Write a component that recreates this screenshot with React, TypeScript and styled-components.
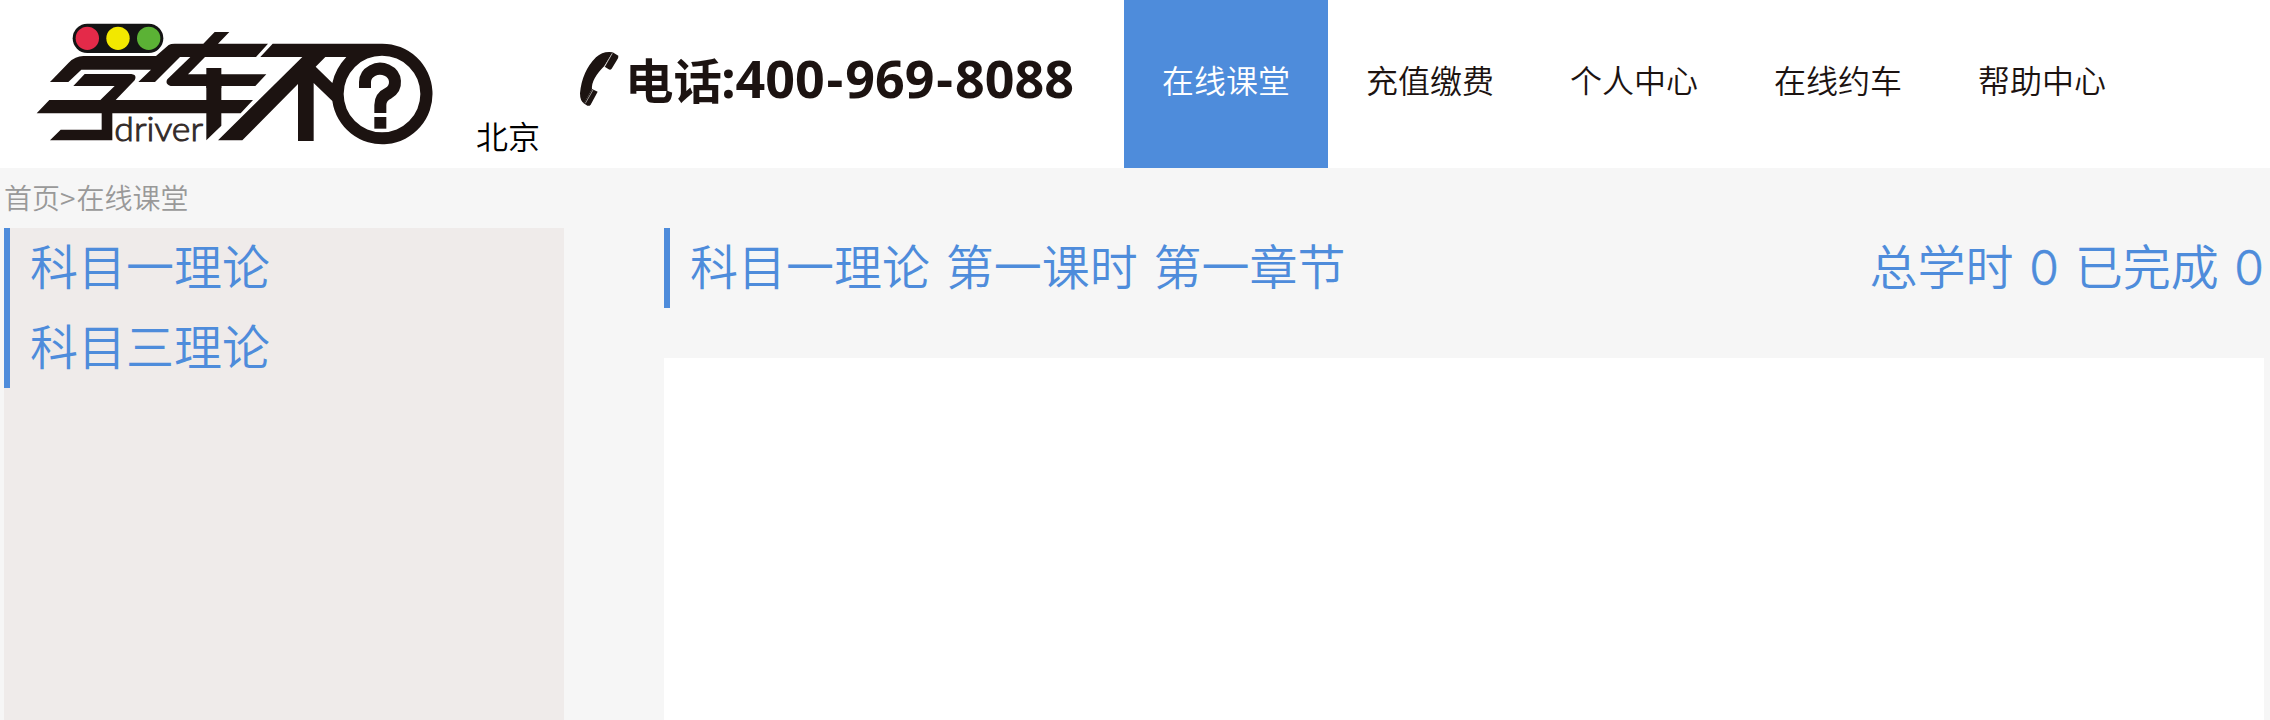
import React from 'react';
import styled, { createGlobalStyle } from 'styled-components';

const BLUE = '#4e8cdb';
const INK = '#1c1311';

const GlobalStyle = createGlobalStyle`
  * { box-sizing: border-box; }
  body {
    margin: 0;
    background: #f6f6f6;
    font-family: "Noto Sans CJK SC", sans-serif;
    font-weight: 350;
    overflow: hidden;
  }
`;

const Page = styled.div`
  height: 720px;
  display: flex;
  flex-direction: column;
  overflow: hidden;
`;

const Header = styled.header`
  flex: none;
  height: 168px;
  background: #fff;
  display: flex;
`;

const Brand = styled.div`
  width: 430px;
  margin: 10px 0 0 20px;
  svg { display: block; }
`;

const City = styled.div`
  width: 113px;
  padding: 111px 0 0 26px;
  font-size: 32px;
  line-height: 48px;
  color: #000;
`;

const Phone = styled.div`
  width: 561px;
  padding-top: 40px;
  svg { display: block; }
`;

const Nav = styled.nav`
  display: flex;
`;

const NavItem = styled.a<{ $active?: boolean }>`
  width: 204px;
  height: 168px;
  text-align: center;
  font-size: 32px;
  line-height: 158px;
  color: ${(p) => (p.$active ? '#fff' : INK)};
  background: ${(p) => (p.$active ? BLUE : 'transparent')};
`;

const Breadcrumb = styled.div`
  flex: none;
  height: 60px;
  padding-left: 4px;
  font-size: 28px;
  line-height: 58px;
  color: #999;
`;

const Separator = styled.span`
  margin-right: 1px;
`;

const Content = styled.div`
  flex: 1;
  display: flex;
  gap: 100px;
  padding: 0 6px 0 4px;
`;

const Sidebar = styled.aside`
  width: 560px;
  background: #efebea;
`;

const Lesson = styled.div`
  height: 80px;
  border-left: 6px solid ${BLUE};
  padding-left: 20px;
  font-size: 48px;
  line-height: 72px;
  color: ${BLUE};
`;

const Main = styled.main`
  flex: 1;
  display: flex;
  flex-direction: column;
`;

const TitleBar = styled.div`
  height: 80px;
  margin-bottom: 50px;
  border-left: 6px solid ${BLUE};
  padding-left: 20px;
  display: flex;
  justify-content: space-between;
  font-size: 48px;
  line-height: 72px;
  word-spacing: 5px;
  color: ${BLUE};
`;

const Count = styled.span`
  font-family: Inter, sans-serif;
  font-weight: 350;
  line-height: 1;
  -webkit-text-stroke: 0.5px ${BLUE};
`;

const Player = styled.div`
  flex: 1;
  background: #fff;
`;

const Logo = () => (
  <svg width="430" height="150" viewBox="0 0 1290 450" fill={INK}>
    <rect x="158" y="41" width="272" height="88" rx="44" fill="#141414" />
    <circle cx="202" cy="85" r="35" fill="#e42a49" />
    <circle cx="294" cy="85" r="35" fill="#f2e800" />
    <circle cx="386" cy="85" r="35" fill="#5bb235" />
    <path d="M90 216 L146 158 Q166 138 190 138 H408 L446 105 Q452 101 464 101 H550 L584 66 H628 L594 101 H744 L708 141 H555 L504 193 H739 L706 228 H604 V270 H699 L662 310 H604 V347 L559 391 V310 H277 V391 H90 L122 359 H245 V310 H50 L88 270 H241 L284 228 H160 L194 192 H334 Q352 194 344 211 L287 270 H559 V228 H452 Q434 222 442 208 L511 141 H480 L405 216 H355 L393 179 H184 L145 216 Z" />
    <rect x="559" y="174" width="45" height="60" />
    <path d="M758 101 H1085 A151 151 0 1 1 937 273 L881 219 V393 H834 V222 L667 391 H594 L847 141 H721 Z M916 141 L887 170 L937 219 Q946 176 979 141 Z M1086 137 A115 115 0 1 0 1086 367 A115 115 0 1 0 1086 137 Z" fillRule="evenodd" />
    <path d="M1035 234 V216 A45 40 0 1 1 1106 249 Q1081 261 1081 285 V309" fill="none" stroke={INK} strokeWidth="36" />
    <rect x="1063" y="321" width="36" height="35" />
    <text x="283" y="394" fontFamily="Lato, sans-serif" fontWeight="300" fontSize="101" textLength="266" lengthAdjust="spacingAndGlyphs" fill="#332b29" stroke="#332b29" strokeWidth="3">driver</text>
  </svg>
);

const PhoneNumber = () => (
  <svg width="520" height="80" viewBox="0 0 520 80" fill={INK}>
    <g transform="translate(-3 0) scale(0.3333)">
      <path d="M158 37 Q130 32 108 52 Q66 94 60 160 Q60 183 72 190 L96 147 Q93 118 133 78 Z" />
      <path d="M158 37 L175 47 Q176 53 171 60 L155 86 Q151 91 146 88 L134 80 Z" />
      <path d="M96 147 L113 155 L92 194 Q88 199 82 197 L71 190 Z" />
      <path d="M157 40 L134 80 M99 150 L76 190" stroke="#d8d4d3" strokeWidth="2" />
    </g>
    <text x="62" y="59" fontFamily="'Noto Sans CJK SC', sans-serif" fontWeight="700" fontSize="48" textLength="97" lengthAdjust="spacingAndGlyphs">电话</text>
    <g fontFamily="'Open Sans', sans-serif" fontWeight="700" fontSize="52">
      <text x="158" y="58">:</text>
      <text x="172.5" y="58" dx="0 0 0 1.9 1.9 0 0 1.9 1.9">400-969-8088</text>
    </g>
  </svg>
);

const navLabels = ['在线课堂', '充值缴费', '个人中心', '在线约车', '帮助中心'];
const lessons = ['科目一理论', '科目三理论'];

export default function App() {
  return (
    <Page>
      <GlobalStyle />
      <Header>
        <Brand><Logo /></Brand>
        <City>北京</City>
        <Phone><PhoneNumber /></Phone>
        <Nav>
          {navLabels.map((label, i) => (
            <NavItem key={label} $active={i === 0}>{label}</NavItem>
          ))}
        </Nav>
      </Header>
      <Breadcrumb>首页<Separator>&gt;</Separator>在线课堂</Breadcrumb>
      <Content>
        <Sidebar>
          {lessons.map((name) => <Lesson key={name}>{name}</Lesson>)}
        </Sidebar>
        <Main>
          <TitleBar>
            <span>科目一理论 第一课时 第一章节</span>
            <span>总学时 <Count>0</Count> 已完成 <Count>0</Count></span>
          </TitleBar>
          <Player />
        </Main>
      </Content>
    </Page>
  );
}
